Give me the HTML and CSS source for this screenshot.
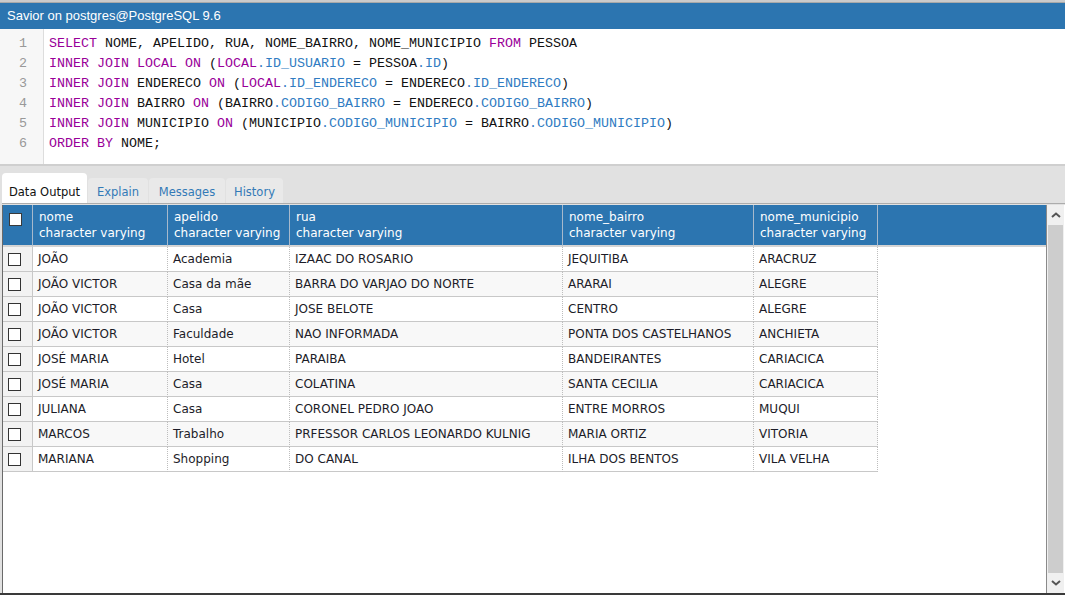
FILE: index.html
```html
<!DOCTYPE html>
<html>
<head>
<meta charset="utf-8">
<title>Savior</title>
<link rel="stylesheet" href="styles.css">
</head>
<body>
<div class="app">
  <div class="topstrip"></div>
  <div class="titlebar">Savior on postgres@PostgreSQL 9.6</div>
  <div class="editor">
    <div class="gutter">
      <div>1</div><div>2</div><div>3</div><div>4</div><div>5</div><div>6</div>
    </div>
    <div class="code">
      <div class="line"><span class="kw">SELECT</span> NOME, APELIDO, RUA, NOME_BAIRRO, NOME_MUNICIPIO <span class="kw">FROM</span> PESSOA</div>
      <div class="line"><span class="kw">INNER JOIN LOCAL ON</span> (<span class="kw">LOCAL</span><span class="pr">.ID_USUARIO</span> = PESSOA<span class="pr">.ID</span>)</div>
      <div class="line"><span class="kw">INNER JOIN</span> ENDERECO <span class="kw">ON</span> (<span class="kw">LOCAL</span><span class="pr">.ID_ENDERECO</span> = ENDERECO<span class="pr">.ID_ENDERECO</span>)</div>
      <div class="line"><span class="kw">INNER JOIN</span> BAIRRO <span class="kw">ON</span> (BAIRRO<span class="pr">.CODIGO_BAIRRO</span> = ENDERECO<span class="pr">.CODIGO_BAIRRO</span>)</div>
      <div class="line"><span class="kw">INNER JOIN</span> MUNICIPIO <span class="kw">ON</span> (MUNICIPIO<span class="pr">.CODIGO_MUNICIPIO</span> = BAIRRO<span class="pr">.CODIGO_MUNICIPIO</span>)</div>
      <div class="line"><span class="kw">ORDER BY</span> NOME;</div>
    </div>
  </div>
  <div class="results">
    <div class="tabs">
      <div class="tab active t-data">Data Output</div>
      <div class="tab t-explain">Explain</div>
      <div class="tab t-messages">Messages</div>
      <div class="tab t-history">History</div>
    </div>
    <div class="gridwrap">
      <div class="grid">
        <div class="row head">
          <div class="cell chk"><span class="box"></span></div>
          <div class="cell">nome<br>character varying</div>
          <div class="cell">apelido<br>character varying</div>
          <div class="cell">rua<br>character varying</div>
          <div class="cell">nome_bairro<br>character varying</div>
          <div class="cell">nome_municipio<br>character varying</div>
          <div class="cell fill"></div>
        </div>
        <div class="row"><div class="cell chk"><span class="box"></span></div><div class="cell">JOÃO</div><div class="cell">Academia</div><div class="cell">IZAAC DO ROSARIO</div><div class="cell">JEQUITIBA</div><div class="cell">ARACRUZ</div></div>
        <div class="row"><div class="cell chk"><span class="box"></span></div><div class="cell">JOÃO VICTOR</div><div class="cell">Casa da mãe</div><div class="cell">BARRA DO VARJAO DO NORTE</div><div class="cell">ARARAI</div><div class="cell">ALEGRE</div></div>
        <div class="row"><div class="cell chk"><span class="box"></span></div><div class="cell">JOÃO VICTOR</div><div class="cell">Casa</div><div class="cell">JOSE BELOTE</div><div class="cell">CENTRO</div><div class="cell">ALEGRE</div></div>
        <div class="row"><div class="cell chk"><span class="box"></span></div><div class="cell">JOÃO VICTOR</div><div class="cell">Faculdade</div><div class="cell">NAO INFORMADA</div><div class="cell">PONTA DOS CASTELHANOS</div><div class="cell">ANCHIETA</div></div>
        <div class="row"><div class="cell chk"><span class="box"></span></div><div class="cell">JOSÉ MARIA</div><div class="cell">Hotel</div><div class="cell">PARAIBA</div><div class="cell">BANDEIRANTES</div><div class="cell">CARIACICA</div></div>
        <div class="row"><div class="cell chk"><span class="box"></span></div><div class="cell">JOSÉ MARIA</div><div class="cell">Casa</div><div class="cell">COLATINA</div><div class="cell">SANTA CECILIA</div><div class="cell">CARIACICA</div></div>
        <div class="row"><div class="cell chk"><span class="box"></span></div><div class="cell">JULIANA</div><div class="cell">Casa</div><div class="cell">CORONEL PEDRO JOAO</div><div class="cell">ENTRE MORROS</div><div class="cell">MUQUI</div></div>
        <div class="row"><div class="cell chk"><span class="box"></span></div><div class="cell">MARCOS</div><div class="cell">Trabalho</div><div class="cell">PRFESSOR CARLOS LEONARDO KULNIG</div><div class="cell">MARIA ORTIZ</div><div class="cell">VITORIA</div></div>
        <div class="row"><div class="cell chk"><span class="box"></span></div><div class="cell">MARIANA</div><div class="cell">Shopping</div><div class="cell">DO CANAL</div><div class="cell">ILHA DOS BENTOS</div><div class="cell">VILA VELHA</div></div>
      </div>
      <div class="scrollbar">
        <div class="sb-btn"><svg width="10" height="6" viewBox="0 0 10 6"><path d="M1 5 L5 1.5 L9 5" fill="none" stroke="#555" stroke-width="2"/></svg></div>
        <div class="sb-thumb"></div>
        <div class="sb-btn"><svg width="10" height="6" viewBox="0 0 10 6"><path d="M1 1 L5 4.5 L9 1" fill="none" stroke="#555" stroke-width="2"/></svg></div>
      </div>
    </div>
  </div>
</div>
</body>
</html>
```

FILE: styles.css
```css
html, body {
  margin: 0;
  padding: 0;
  width: 1065px;
  height: 595px;
  overflow: hidden;
  background: #ffffff;
}

.app {
  display: flex;
  flex-direction: column;
  height: 595px;
  width: 1065px;
}

.topstrip {
  height: 2px;
  background: #cbcbcb;
  border-bottom: 1px solid #a9a9a9;
}

.titlebar {
  height: 26px;
  box-sizing: border-box;
  background: #2c75b0;
  color: #ffffff;
  font-family: "Liberation Sans", Arial, sans-serif;
  font-size: 13px;
  line-height: 26px;
  padding-left: 7px;
}

.editor {
  display: flex;
  height: 135px;
  background: #ffffff;
  border-bottom: 2px solid #cfcfcf;
  font-family: "Liberation Mono", "Courier New", monospace;
  font-size: 13.33px;
  line-height: 20px;
}

.gutter {
  width: 44px;
  box-sizing: border-box;
  background: #f7f7f7;
  border-right: 1px solid #dddddd;
  color: #999999;
  text-align: right;
  padding: 5px 16px 0 0;
}

.code {
  padding: 5px 0 0 5px;
  color: #111111;
}

.line {
  white-space: pre;
  height: 20px;
}

.kw { color: #990099; }
.pr { color: #2f7cc2; }

.results {
  flex: 1;
  display: flex;
  flex-direction: column;
  background: #e1e1e1;
  padding-left: 2px;
  border-bottom: 2px solid #3a3a3a;
  min-height: 0;
}

.tabs {
  height: 37px;
  display: flex;
  align-items: flex-end;
  border-bottom: 1px solid #acacac;
  font-family: "DejaVu Sans", Verdana, sans-serif;
  font-size: 11.5px;
}

.tab {
  height: 25px;
  line-height: 28px;
  text-align: center;
  margin-right: 1px;
  background: #e9e9e9;
  color: #337ab7;
  border-radius: 4px 4px 0 0;
}

.tab.active {
  height: 30px;
  line-height: 38px;
  background: #ffffff;
  color: #111111;
}

.t-data { width: 85px; }
.t-explain { width: 60px; }
.t-messages { width: 76px; }
.t-history { width: 57px; }

.gridwrap {
  flex: 1;
  display: flex;
  min-height: 0;
  margin-top: 1px;
  background: #ffffff;
  border-left: 1px solid #6a6a6a;
}

.grid {
  flex: 1;
  border-right: 1px solid #8a8a8a;
  font-family: "DejaVu Sans", Verdana, sans-serif;
  font-size: 12px;
  color: #1c1c28;
}

.row {
  display: grid;
  grid-template-columns: 30px 135px 122px 273px 191px 124px;
  height: 25px;
  box-sizing: border-box;
}

.row .cell {
  box-sizing: border-box;
  border-right: 1px dotted #bdbdbd;
  border-bottom: 1px solid #c8c8c8;
  padding-left: 5px;
  line-height: 24px;
  white-space: nowrap;
  overflow: hidden;
  background: #ffffff;
}

.row:nth-child(odd) .cell { background: #f8f8f8; }

.row .cell.chk,
.row:nth-child(odd) .cell.chk {
  background: #f2f2f2;
  border-right: 1px solid #c8c8c8;
  padding-left: 5px;
  display: flex;
  align-items: center;
}

.box {
  display: block;
  width: 13px;
  height: 13px;
  box-sizing: border-box;
  border: 1px solid #333333;
  background: #ffffff;
}

.row.head {
  grid-template-columns: 30px 135px 122px 273px 191px 124px 1fr;
  height: 42px;
}

.row.head .cell {
  background: #2c75b0;
  color: #ffffff;
  border-right: 1px solid #a7b9cc;
  border-bottom: 2px solid #d4d4d4;
  line-height: 16px;
  padding: 4px 0 0 6px;
}

.row.head .cell.chk {
  background: #2c75b0;
  border-right: 1px solid #a7b9cc;
  align-items: flex-start;
  padding: 8px 0 0 6px;
}

.row.head .cell.fill {
  border-right: none;
}

.row.head .box {
  border-color: #3a3a3a;
}

.scrollbar {
  width: 17px;
  display: flex;
  flex-direction: column;
  background: #f0f0f0;
  margin-right: 1px;
}

.sb-btn {
  height: 20px;
  display: flex;
  align-items: center;
  justify-content: center;
  background: #f0f0f0;
}

.sb-thumb {
  flex: 1;
  margin: 0 1px;
  background: #cdcdcd;
}
```
